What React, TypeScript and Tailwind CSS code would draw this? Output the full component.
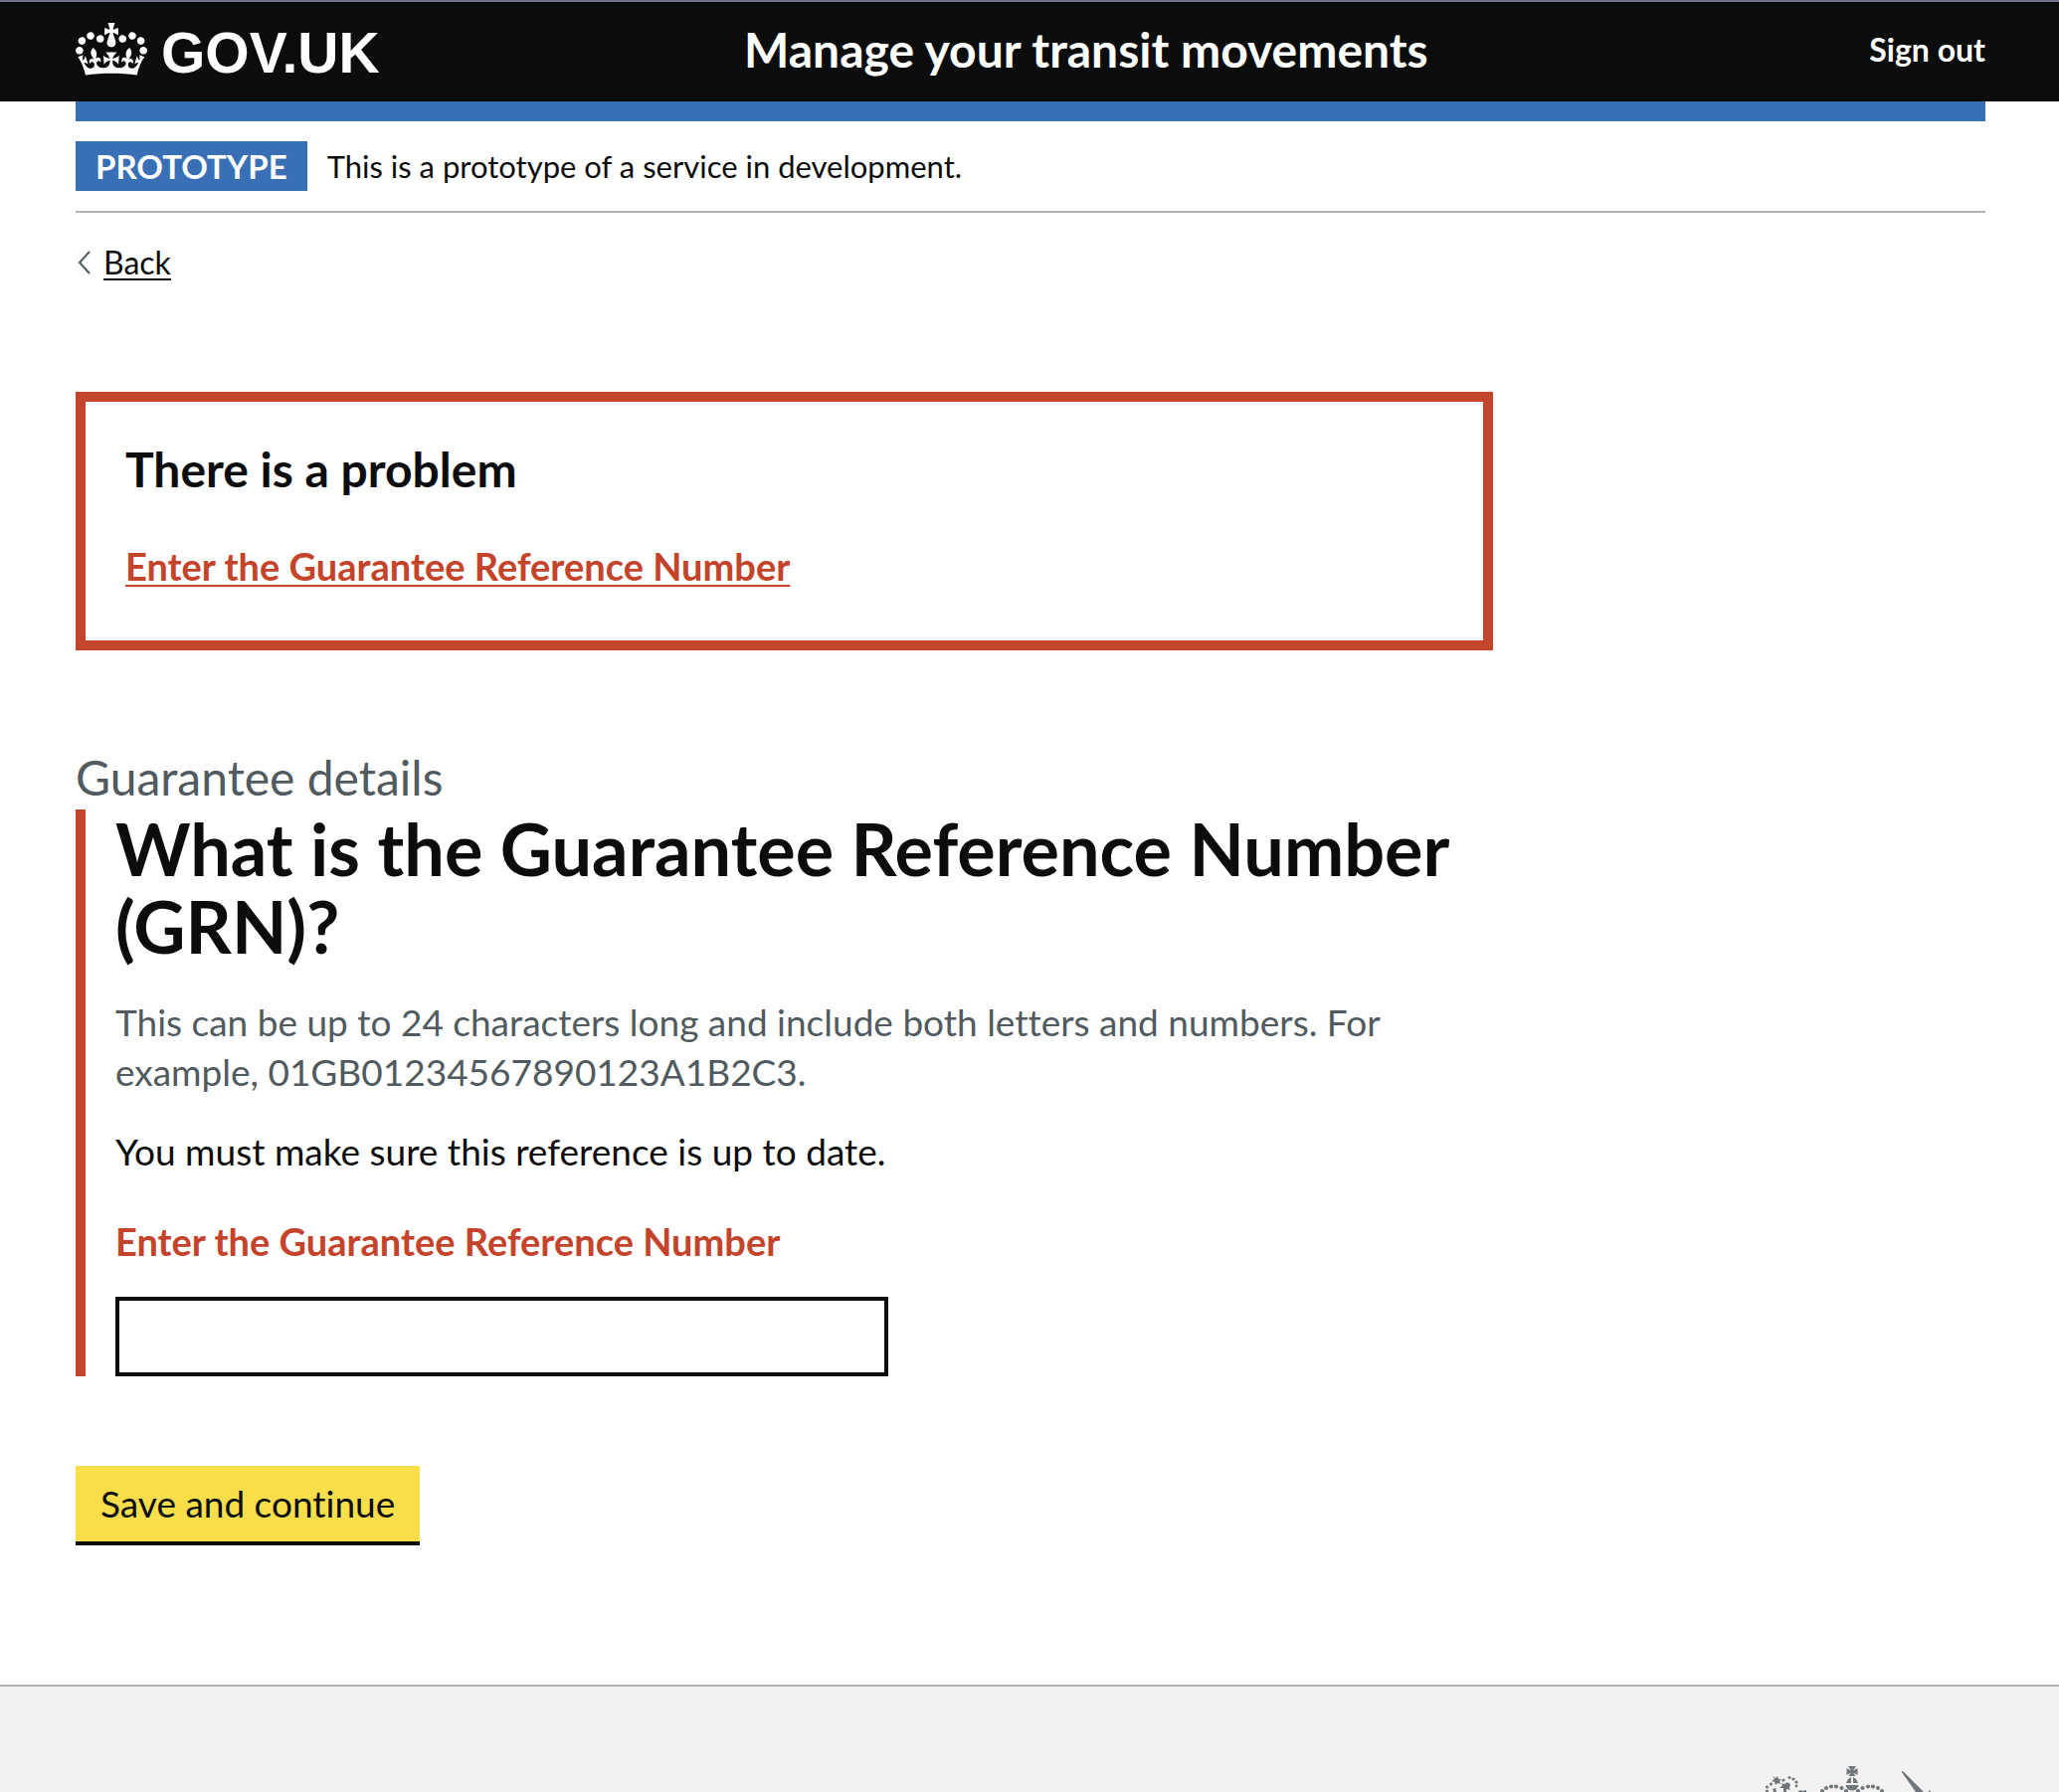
const CROWN_PATH =
  "M25 30.2c3.5 1.5 7.7-.2 9.1-3.7 1.5-3.6-.2-7.8-3.9-9.2-3.6-1.4-7.6.3-9.1 3.9-1.4 3.5.3 7.5 3.9 9zM9 39.5c3.6 1.5 7.8-.2 9.2-3.7 1.5-3.6-.2-7.8-3.9-9.1-3.6-1.5-7.6.2-9.1 3.8-1.4 3.5.3 7.5 3.8 9zM4.4 57.2c3.5 1.5 7.7-.2 9.1-3.8 1.5-3.6-.2-7.7-3.9-9.1-3.5-1.5-7.6.3-9.1 3.8-1.4 3.5.3 7.6 3.9 9.1zm38.3-21.4c3.5 1.5 7.7-.2 9.1-3.8 1.5-3.6-.2-7.7-3.9-9.1-3.6-1.5-7.6.3-9.1 3.8-1.3 3.6.4 7.7 3.9 9.1zm64.4-5.6c-3.6 1.5-7.8-.2-9.1-3.7-1.5-3.6.2-7.8 3.8-9.2 3.6-1.4 7.7.3 9.2 3.9 1.3 3.5-.4 7.5-3.9 9zm15.9 9.3c-3.6 1.5-7.7-.2-9.1-3.7-1.5-3.6.2-7.8 3.7-9.1 3.6-1.5 7.7.2 9.2 3.8 1.5 3.5-.3 7.5-3.8 9zm4.7 17.7c-3.6 1.5-7.8-.2-9.2-3.8-1.5-3.6.2-7.7 3.9-9.1 3.6-1.5 7.7.3 9.2 3.8 1.3 3.5-.4 7.6-3.9 9.1zM89.3 35.8c-3.6 1.5-7.8-.2-9.2-3.8-1.4-3.6.2-7.7 3.9-9.1 3.6-1.5 7.7.3 9.2 3.8 1.4 3.6-.3 7.7-3.9 9.1zM69.7 17.7l8.9 4.7V9.3l-8.9 2.8c-.2-.3-.5-.6-.9-.9L72.4 0H59.6l3.5 11.2c-.3.3-.6.5-.9.9l-8.8-2.8v13.1l8.8-4.7c.3.3.6.7.9.9l-5 15.4v.1c-.2.8-.4 1.6-.4 2.4 0 4.1 3.1 7.5 7 8.1h.2c.3 0 .7.1 1 .1.4 0 .7 0 1-.1h.2c4-.6 7.1-4.1 7.1-8.1 0-.8-.1-1.7-.4-2.4V34l-5.1-15.4c.4-.2.7-.6 1-.9zM66 92.8c16.9 0 32.8 1.1 47.1 3.2 4-16.9 8.9-26.7 14-33.5l-9.6-3.4c1 4.9 1.1 7.2 0 10.2-1.5-1.4-3-4.3-4.2-8.7L108.6 76c2.8-2 5-3.2 7.5-3.3-4.4 9.4-10 11.9-13.6 11.2-4.3-.8-6.3-4.6-5.6-7.9 1-4.7 5.7-5.9 8-.5 4.3-8.7-3-11.4-7.6-8.8 7.1-7.2 7.9-13.5 2.1-21.1-8 6.1-8.1 12.3-4.5 20.8-4.7-5.4-12.1-2.5-9.5 6.2 3.4-5.2 7.9-2 7.2 3.1-.6 4.3-6.4 7.8-13.5 7.2-10.3-.9-10.9-8-11.2-13.8 2.5-.5 7.1 1.8 11 7.3L80.2 60c-4.1 4.4-8 5.3-12.3 5.4 1.4-4.4 8-11.6 8-11.6H55.5s6.4 7.2 7.9 11.6c-4.2-.1-8-1-12.3-5.4l1.4 16.4c3.9-5.5 8.5-7.7 10.9-7.3-.3 5.8-.9 12.8-11.1 13.8-7.2.6-12.9-2.9-13.5-7.2-.7-5 3.8-8.3 7.1-3.1 2.7-8.7-4.6-11.6-9.4-6.2 3.7-8.5 3.6-14.7-4.6-20.8-5.8 7.6-5 13.9 2.2 21.1-4.7-2.6-11.9.1-7.7 8.8 2.3-5.5 7.1-4.2 8.1.5.7 3.3-1.3 7.1-5.7 7.9-3.5.7-9-1.8-13.5-11.2 2.5.1 4.7 1.3 7.5 3.3l-4.7-15.4c-1.2 4.4-2.7 7.2-4.3 8.7-1.1-3-.9-5.3 0-10.2l-9.5 3.4c5 6.9 9.9 16.7 14 33.5 14.8-2.1 30.8-3.2 47.7-3.2z";

function Header() {
  return (
    <header className="border-t-2 border-[#71708f] bg-[#0b0c0c] text-white">
      <div className="flex h-[100px] items-center pr-[74px] pb-[5px] pl-[76px]">
        <div className="w-[35%]">
          <a href="#home" className="inline-flex items-end gap-[14px] align-top" aria-label="GOV.UK">
            <svg viewBox="0 0 132 97" className="h-[53px] w-[72px]" fill="currentColor" aria-hidden="true">
              <path d={CROWN_PATH} />
            </svg>
            <span className="font-['Liberation_Sans',sans-serif] text-[57px] leading-[46px] font-bold">GOV.UK</span>
          </a>
        </div>
        <a href="#service" className="text-5xl leading-[60px] font-bold">
          Manage your transit movements
        </a>
        <a href="#sign-out" className="ml-auto text-[32px] leading-10 font-bold">
          Sign out
        </a>
      </div>
    </header>
  );
}

function PhaseBanner() {
  return (
    <div className="flex items-center gap-5 border-b-2 border-[#b1b4b6] py-5">
      <strong className="bg-[#386fb5] px-5 text-[33px] leading-[50px] font-bold text-white">PROTOTYPE</strong>
      <span className="text-[31px] leading-10">This is a prototype of a service in development.</span>
    </div>
  );
}

function BackLink() {
  return (
    <a href="#back" className="mt-[30px] inline-flex items-center gap-3 text-[32px] leading-10">
      <svg viewBox="0 0 16 24" className="h-6 w-4" fill="none" stroke="#505a5f" strokeWidth="2" aria-hidden="true">
        <path d="M14 1 4 12l10 11" />
      </svg>
      <span className="underline decoration-2 underline-offset-4">Back</span>
    </a>
  );
}

function ErrorSummary() {
  return (
    <section role="alert" aria-labelledby="error-title" className="mt-[110px] border-[10px] border-[#c4432b] p-10 pb-[50px]">
      <h2 id="error-title" className="text-5xl leading-[56px] font-bold">
        There is a problem
      </h2>
      <a
        href="#grn"
        className="mt-11 block w-fit text-[38px] leading-[50px] font-bold text-[#c4432b] underline decoration-2 underline-offset-4"
      >
        Enter the Guarantee Reference Number
      </a>
    </section>
  );
}

function GrnForm() {
  return (
    <form onSubmit={(event) => event.preventDefault()}>
      <p className="mt-24 text-5xl leading-[64px] text-[#505a5f]">Guarantee details</p>
      <div className="border-l-[10px] border-[#c4432b] pl-[30px]">
        <h1 className="text-7xl leading-[78px] font-bold">
          <label htmlFor="grn">What is the Guarantee Reference Number (GRN)?</label>
        </h1>
        <p id="grn-hint" className="mt-[33px] text-[37px] leading-[50px] text-[#505a5f]">
          This can be up to 24 characters long and include both letters and numbers. For example,
          01GB01234567890123A1B2C3.
        </p>
        <p className="mt-[30px] text-[37px] leading-[50px]">You must make sure this reference is up to date.</p>
        <p id="grn-error" className="mt-10 text-[38px] leading-[50px] font-bold text-[#c4432b]">
          Enter the Guarantee Reference Number
        </p>
        <input
          id="grn"
          name="grn"
          type="text"
          aria-describedby="grn-hint grn-error"
          aria-invalid="true"
          className="mt-[31px] block h-20 w-full max-w-[777px] border-4 border-[#0b0c0c] px-2 text-[37px]"
        />
      </div>
      <button
        type="submit"
        className="mt-[90px] block border-b-4 border-[#0b0c0c] bg-[#f8de4b] px-[25px] py-[13px] text-[37px] leading-[50px]"
      >
        Save and continue
      </button>
    </form>
  );
}

function Footer() {
  return (
    <footer className="mt-[140px] flex justify-end border-t-2 border-[#b1b4b6] bg-[#f3f2f1] pt-[69px] pr-[74px]">
      <svg viewBox="0 0 250 37" className="h-[37px] w-[250px]" fill="#6f777b" aria-hidden="true">
        {/* lion's crown */}
        <path d="m36 21 3 2 2-2 1 3 3 0-2 2 1 3-3-1-2 2-1-3-3-1 3-2zM43 33l3-3-1-2 3 1 3-2-1 3 4-1-2 3 2 3-4-1v3h-3v-4zM50 27l4 2-1 4h-3zM36 34l3-1 1 4h-3z" />
        <circle cx="47" cy="25" r="1.6" />
        <circle cx="53" cy="22.5" r="1.6" />
        <circle cx="57" cy="24" r="1.6" />
        <circle cx="60" cy="27" r="1.6" />
        <circle cx="60" cy="31" r="1.4" />
        <circle cx="34.5" cy="29" r="1.6" />
        <circle cx="30.5" cy="32" r="1.6" />
        <circle cx="30.5" cy="36" r="1.6" />
        <path d="M61 37l3-2 2 1 4-1v2z" />
        {/* imperial crown */}
        <path d="M112 11h8l-3 4.500 4.500-2.500v7l-4.500-2.500 2.500 3.500h-7l2.500-3.500-4.500 2.500v-7l4.500 2.500z" />
        <path d="M115 22v6h-5l2-4zM117 22v6h5l-2-4zM109.500 30h13q-1 5.500-6.500 5.500t-6.500-5.500z" />
        <circle cx="86" cy="36" r="2" />
        <circle cx="90" cy="33" r="2" />
        <circle cx="95" cy="31.5" r="2.1" />
        <circle cx="100" cy="31.5" r="2.1" />
        <circle cx="105.500" cy="33" r="2.1" />
        <circle cx="110" cy="36" r="2.1" />
        <circle cx="122" cy="36" r="2.1" />
        <circle cx="126.5" cy="33" r="2.1" />
        <circle cx="132" cy="31.5" r="2.1" />
        <circle cx="137" cy="31.5" r="2.1" />
        <circle cx="142" cy="33" r="2" />
        <circle cx="146" cy="36" r="2" />
        {/* unicorn's horn */}
        <path d="m165.500 16.500 1.500-.5 21 21h-8zM193 37v-2l3 2z" />
      </svg>
    </footer>
  );
}

export default function App() {
  return (
    <div className="flex min-h-screen flex-col bg-white font-[Lato,sans-serif] text-[#0b0c0c] [font-variant-ligatures:none]">
      <Header />
      <div className="pr-[74px] pl-[76px]">
        <div className="h-5 bg-[#386fb5]" />
        <PhaseBanner />
        <BackLink />
        <main className="max-w-[1425px]">
          <ErrorSummary />
          <GrnForm />
        </main>
      </div>
      <Footer />
    </div>
  );
}
